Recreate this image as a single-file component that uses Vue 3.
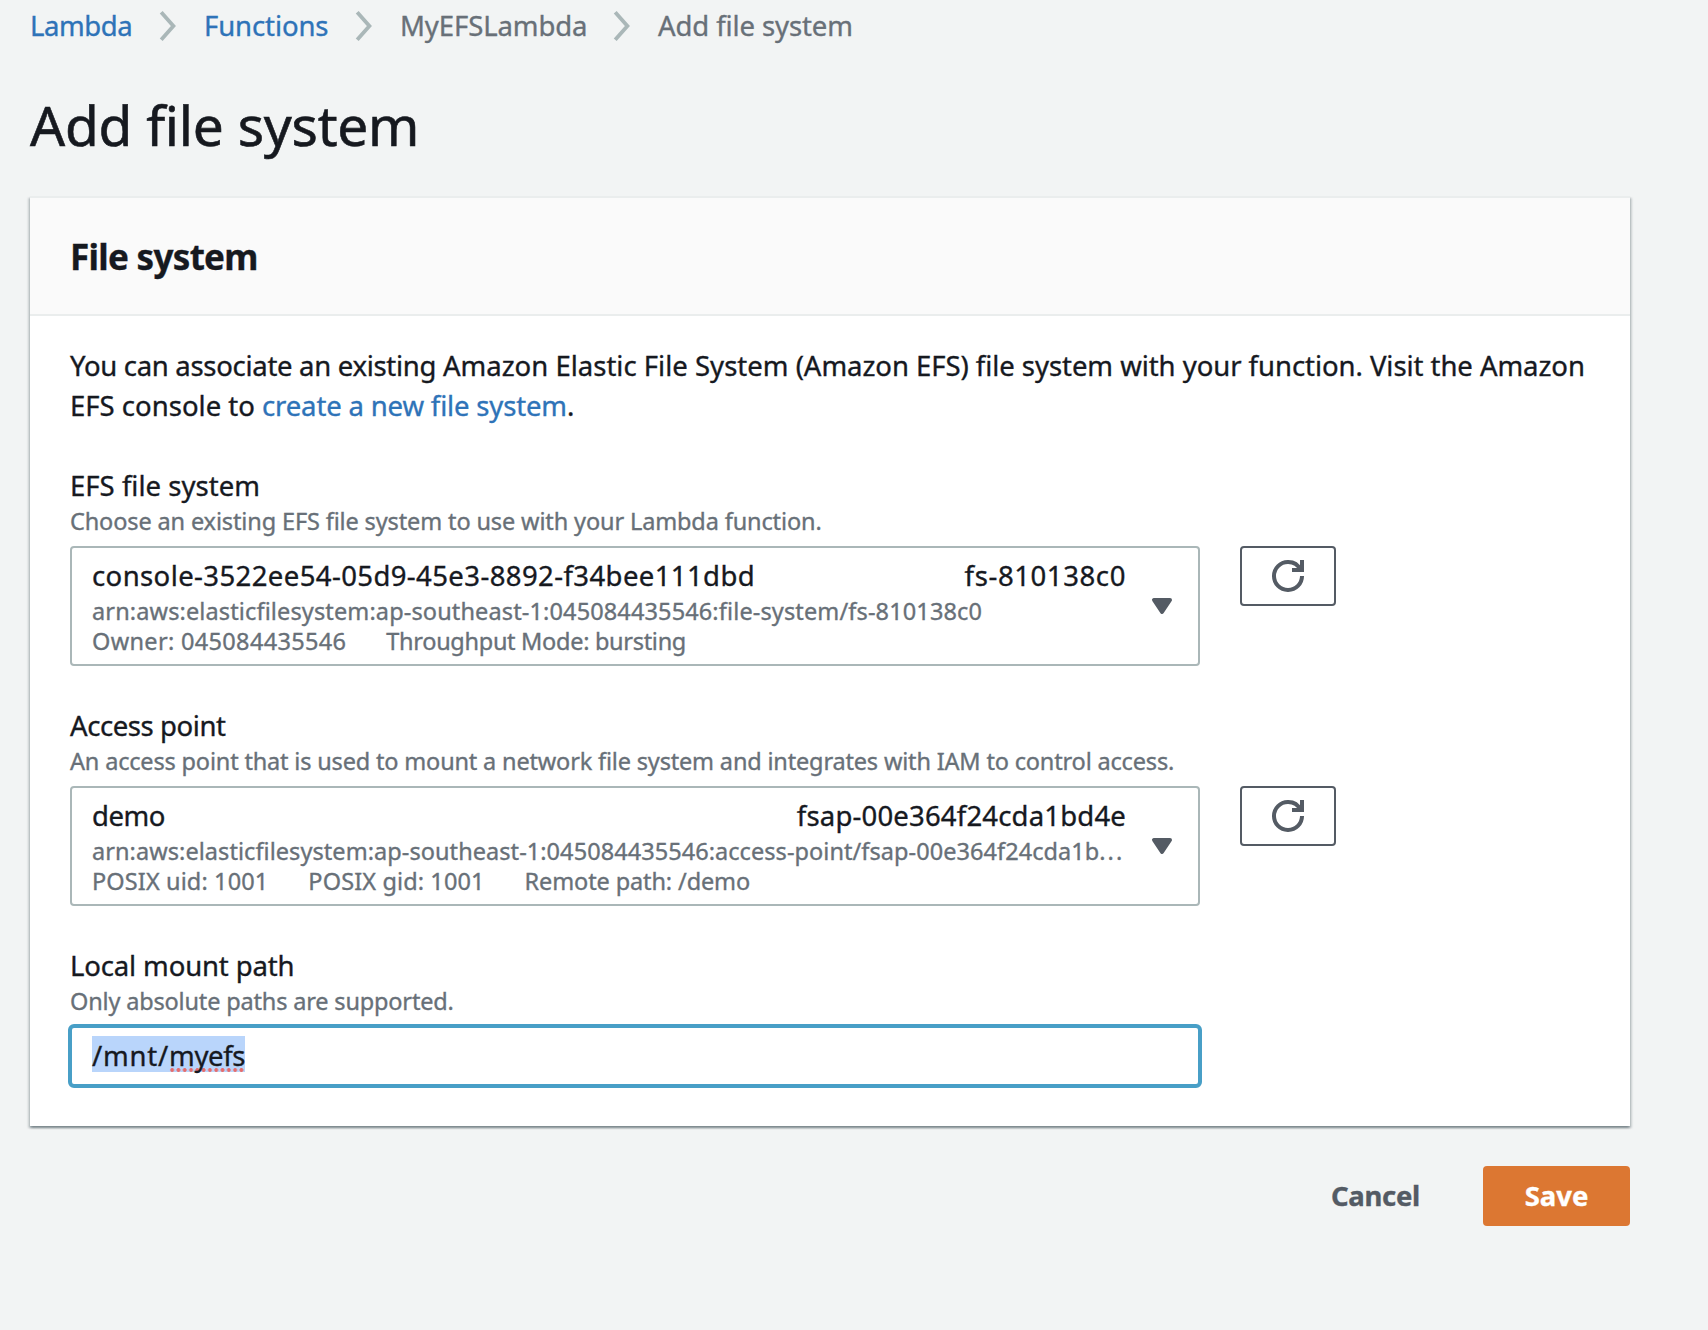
<script setup>
const crumbs = [
  { text: 'Lambda', link: true, cls: 'crumb-a' },
  { text: 'Functions', link: true, cls: 'crumb-b' },
  { text: 'MyEFSLambda', link: false, cls: 'crumb-c' },
  { text: 'Add file system', link: false, cls: 'crumb-d' },
]

const selects = [
  {
    key: 'efs',
    label: 'EFS file system',
    hint: 'Choose an existing EFS file system to use with your Lambda function.',
    name: 'console-3522ee54-05d9-45e3-8892-f34bee111dbd',
    id: 'fs-810138c0',
    arn: 'arn:aws:elasticfilesystem:ap-southeast-1:045084435546:file-system/fs-810138c0',
    clipped: false,
    tags: ['Owner: 045084435546', 'Throughput Mode: bursting'],
  },
  {
    key: 'ap',
    label: 'Access point',
    hint: 'An access point that is used to mount a network file system and integrates with IAM to control access.',
    name: 'demo',
    id: 'fsap-00e364f24cda1bd4e',
    arn: 'arn:aws:elasticfilesystem:ap-southeast-1:045084435546:access-point/fsap-00e364f24cda1b',
    clipped: true,
    tags: ['POSIX uid: 1001', 'POSIX gid: 1001', 'Remote path: /demo'],
  },
]
</script>

<template>
  <main class="page">
    <nav class="crumbs">
      <template v-for="(c, i) in crumbs" :key="c.text">
        <svg v-if="i" class="chevron" width="18" height="32" viewBox="0 0 18 32">
          <path d="M2.2 2.2 L14.4 16 L2.2 29.8" fill="none" stroke="#aab7b8" stroke-width="3.8" />
        </svg>
        <a v-if="c.link" class="crumb link" :class="c.cls">{{ c.text }}</a>
        <span v-else class="crumb" :class="c.cls">{{ c.text }}</span>
      </template>
    </nav>

    <h1 class="title">Add file system</h1>

    <section class="card">
      <header class="card-head"><h2>File system</h2></header>
      <div class="card-body">
        <p class="intro">
          <span class="lead">You can associate an existing </span><span class="product">Amazon Elastic File System </span>(Amazon EFS) file system with your function. Visit the Amazon<br />
          <span class="product">EFS console to </span><a class="link">create a new file system</a>.
        </p>

        <div v-for="s in selects" :key="s.key" class="field" :class="s.key">
          <label class="label">{{ s.label }}</label>
          <div class="hint">{{ s.hint }}</div>
          <div class="row">
            <div class="select">
              <div class="option">
                <div class="option-top">
                  <span class="name">{{ s.name }}</span>
                  <span class="id">{{ s.id }}</span>
                </div>
                <div class="arn">{{ s.arn }}<span v-if="s.clipped" class="dots">...</span></div>
                <div class="tags">
                  <span v-for="(t, i) in s.tags" :key="t" :class="'tag-' + i">{{ t }}</span>
                </div>
              </div>
              <svg class="caret" width="32" height="32" viewBox="0 0 16 16">
                <path d="M4 5h8l-4 6-4-6z" fill="#545b64" stroke="#545b64" stroke-width="2" stroke-linejoin="round" />
              </svg>
            </div>
            <button class="refresh" aria-label="Refresh">
              <svg width="32" height="32" viewBox="0 0 16 16" fill="none" stroke="#545b64" stroke-width="2">
                <path d="M10 5h5V0" />
                <path d="M15 8a6.957 6.957 0 0 1-7 7 6.957 6.957 0 0 1-7-7 6.957 6.957 0 0 1 7-7 6.87 6.87 0 0 1 6.3 4" />
              </svg>
            </button>
          </div>
        </div>

        <div class="field mount">
          <label class="label">Local mount path</label>
          <div class="hint">Only absolute paths are supported.</div>
          <div class="input"><span class="selected">/mnt/<span class="misspelt">myefs</span></span></div>
        </div>
      </div>
    </section>

    <footer class="actions">
      <button class="cancel">Cancel</button>
      <button class="save">Save</button>
    </footer>
  </main>
</template>

<style>
body {
  background: #f2f4f4;
}
</style>

<style scoped>
.page {
  box-sizing: border-box;
  width: 1708px;
  height: 1330px;
  padding: 6px 78px 0 30px;
  background: #f2f4f4;
  color: #16191f;
  font: 400 27.5px/40px "Noto Sans", "Open Sans", sans-serif;
  -webkit-text-stroke: 0.35px currentColor;
  overflow: hidden;
}
.link {
  color: #2e73b8;
}
button {
  padding: 0;
  font: inherit;
}
.crumbs {
  display: flex;
  align-items: center;
  height: 40px;
  color: #687078;
  white-space: nowrap;
}
.crumb {
  box-sizing: border-box;
  letter-spacing: -0.1px;
}
.crumb-a {
  width: 129px;
  letter-spacing: -0.4px;
}
.crumb-b {
  width: 151px;
}
.crumb-c {
  width: 213px;
}
.chevron {
  flex: none;
  margin-right: 27px;
}
.crumb-c,
.crumb-b {
  margin-right: 0;
}
.title {
  margin: 49px 0 0;
  font-size: 55px;
  font-weight: 400;
  line-height: 60px;
  letter-spacing: -0.23px;
  -webkit-text-stroke-width: 0.6px;
}
.card {
  box-sizing: border-box;
  height: 930px;
  margin-top: 41px;
  background: #fff;
  border-top: 2px solid #eaeded;
  box-shadow: 0 2px 2px 0 rgba(0, 28, 36, 0.3), 2px 2px 2px 0 rgba(0, 28, 36, 0.15),
    -2px 2px 2px 0 rgba(0, 28, 36, 0.15);
}
.card-head {
  box-sizing: border-box;
  height: 118px;
  padding: 37px 40px 0;
  background: #fafafa;
  border-bottom: 2px solid #eaeded;
}
.card-head h2 {
  margin: 0;
  font-size: 35px;
  font-weight: 700;
  line-height: 44px;
  letter-spacing: -0.7px;
}
.card-body {
  padding: 30px 40px 0;
}
.intro {
  margin: 0 0 40px;
  letter-spacing: -0.05px;
  white-space: nowrap;
}
.lead {
  letter-spacing: -0.3px;
}
.product {
  letter-spacing: 0.01px;
}
.intro .link {
  letter-spacing: -0.16px;
}
.field {
  height: 240px;
}
.label {
  display: block;
  letter-spacing: 0.02px;
}
.ap .label {
  letter-spacing: -0.42px;
}
.mount .label {
  letter-spacing: -0.14px;
}
.hint {
  margin: 0 0 10px;
  color: #687078;
  font-size: 23.5px;
  line-height: 30px;
  letter-spacing: -0.13px;
  white-space: nowrap;
}
.ap .hint,
.mount .hint {
  letter-spacing: -0.17px;
}
.mount .hint {
  margin-bottom: 8px;
}
.row {
  display: flex;
  align-items: flex-start;
  gap: 40px;
}
.select {
  box-sizing: border-box;
  display: flex;
  align-items: center;
  gap: 20px;
  width: 1130px;
  height: 120px;
  padding: 0 20px;
  background: #fff;
  border: 2px solid #aab7b8;
  border-radius: 4px;
}
.option {
  width: 1034px;
  height: 98px;
  white-space: nowrap;
}
.option-top {
  display: flex;
  justify-content: space-between;
  height: 39px;
  line-height: 38px;
}
.name {
  letter-spacing: 0.4px;
}
.ap .name {
  letter-spacing: -0.5px;
}
.id {
  letter-spacing: 0.6px;
}
.ap .id {
  letter-spacing: 0.18px;
}
.arn,
.tags {
  color: #687078;
  font-size: 23.5px;
  line-height: 30px;
}
.arn {
  letter-spacing: 0.13px;
}
.ap .arn {
  letter-spacing: 0.06px;
}
.arn .dots {
  letter-spacing: 2px;
}
.tags {
  display: flex;
  gap: 40px;
  letter-spacing: 0.12px;
}
.efs .tag-0 {
  letter-spacing: 0.33px;
}
.efs .tag-1 {
  letter-spacing: -0.3px;
}
.ap .tag-2 {
  letter-spacing: -0.12px;
}
.caret {
  flex: none;
}
.refresh {
  box-sizing: border-box;
  display: flex;
  align-items: center;
  justify-content: center;
  width: 96px;
  height: 60px;
  background: #fff;
  border: 2px solid #545b64;
  border-radius: 4px;
}
.input {
  box-sizing: border-box;
  display: flex;
  align-items: center;
  width: 1134px;
  height: 64px;
  margin-left: -2px;
  padding: 0 20px 4px;
  background: #fff;
  border: 4px solid #489fc7;
  border-radius: 6px;
}
.selected {
  height: 36px;
  background: #b9d5fb;
  line-height: 40px;
  letter-spacing: 0.8px;
}
.misspelt {
  display: inline-block;
  height: 36px;
  background: radial-gradient(circle at center, #e66c6c 1.6px, transparent 2.2px) 0 100% / 6.3px 4px repeat-x;
  letter-spacing: -0.4px;
}
.actions {
  display: flex;
  justify-content: flex-end;
  margin-top: 40px;
}
.actions button {
  height: 60px;
  border: 0;
  border-radius: 4px;
  font-weight: 700;
}
.cancel {
  width: 171px;
  margin-right: 22px;
  background: none;
  color: #545b64;
  letter-spacing: -0.3px;
}
.save {
  width: 147px;
  background: #dc7732;
  color: #fff;
}
</style>
